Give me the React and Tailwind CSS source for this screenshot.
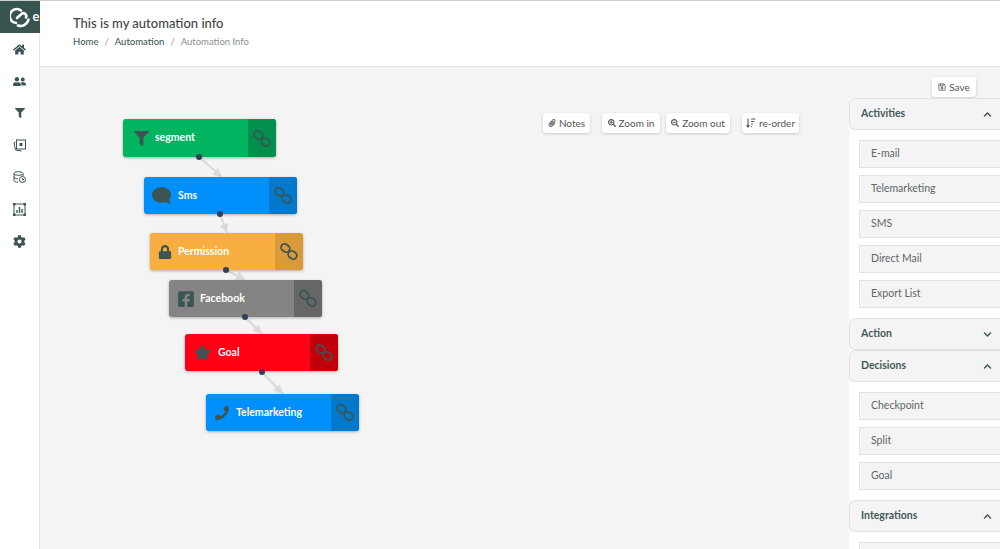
import React from "react";
import { FaHome, FaFilter, FaCog, FaComment, FaLock, FaFacebookSquare, FaStar, FaPhoneAlt, FaPaperclip, FaSearchPlus, FaSearchMinus, FaRegSave, FaChevronUp, FaChevronDown, FaUserFriends } from "react-icons/fa";

const ink = "#3a5553";

function Chain() {
  return (
    <svg width="18" height="17" viewBox="0 0 18 17" fill="none" stroke={ink} strokeWidth="1.7">
      <rect x="0.9" y="1.5" width="9" height="7" rx="3.4" transform="rotate(35 5.4 5)" />
      <rect x="8" y="8.5" width="9" height="7" rx="3.4" transform="rotate(35 12.5 12)" />
    </svg>
  );
}

const nodes = [
  { label: "segment", x: 123, y: 119, w: 153, h: 38, cls: "bg-[#00b460]", dark: "bg-[#008f4c]", Icon: FaFilter, size: 15, iconBox: "w-[32px] pl-[11px]", text: "ml-0" },
  { label: "Sms", x: 144, y: 177, w: 153, h: 37, cls: "bg-[#0090fb]", dark: "bg-[#0079cc]", Icon: FaComment, size: 19, flip: true, iconBox: "w-[34px] pl-[8px]", text: "ml-0" },
  { label: "Permission", x: 150, y: 233, w: 153, h: 37, cls: "bg-[#f8ae40]", dark: "bg-[#da9a39]", Icon: FaLock, size: 14, iconBox: "w-[28px] pl-[8px]", text: "ml-0" },
  { label: "Facebook", x: 169, y: 280, w: 153, h: 37, cls: "bg-[#848484]", dark: "bg-[#666666]", Icon: FaFacebookSquare, size: 18, iconBox: "w-[31px] pl-[8px]", text: "ml-0" },
  { label: "Goal", x: 185, y: 334, w: 153, h: 37, cls: "bg-[#ff0014]", dark: "bg-[#c00009]", Icon: FaStar, size: 17, iconBox: "w-[33px] pl-[9px]", text: "ml-0" },
  { label: "Telemarketing", x: 206, y: 394, w: 153, h: 37, cls: "bg-[#0090fb]", dark: "bg-[#0079cc]", Icon: FaPhoneAlt, size: 14, flipPhone: true, iconBox: "w-[30px] pl-[9px]", text: "ml-0" },
];

const links = [
  [199, 157, 222, 177],
  [220, 214, 227, 233],
  [226, 270, 245, 280],
  [245, 317, 262, 334],
  [262, 372, 283, 394],
];

function Connectors() {
  return (
    <svg className="absolute left-0 top-0" width="960" height="482" viewBox="40 67 960 482">
      {links.map(([a, b, c, d], i) => {
        const ang = Math.atan2(d - b, c - a);
        const p = (r, o) => `${c - r * Math.cos(ang) - o * Math.sin(ang)},${d - r * Math.sin(ang) + o * Math.cos(ang)}`;
        return (
          <g key={i}>
            <line x1={a} y1={b} x2={c} y2={d} stroke="#d9d9d9" strokeWidth="2" />
            <polygon points={`${c},${d} ${p(9, 4.5)} ${p(9, -4.5)}`} fill="#d9d9d9" />
          </g>
        );
      })}
    </svg>
  );
}

function Node({ n }) {
  const { Icon } = n;
  return (
    <div
      className={`absolute flex items-center rounded-[3px] shadow-[0_1px_3px_rgba(0,0,0,0.3)] overflow-hidden ${n.cls}`}
      style={{ left: n.x - 40, top: n.y - 67, width: n.w, height: n.h }}
    >
      <div className={`shrink-0 ${n.iconBox}`}>
        <Icon size={n.size} color={ink} style={n.flip || n.flipPhone ? { transform: "scaleX(-1)" } : undefined} />
      </div>
      <span className="flex-1 text-[10.5px] font-bold text-white">{n.label}</span>
      <div className={`flex h-full w-[28px] items-center justify-center ${n.dark}`}>
        <Chain />
      </div>
    </div>
  );
}

function Dots() {
  return links.map(([a, b], i) => (
    <div key={i} className="absolute h-[6px] w-[6px] rounded-full bg-[#2f4258]" style={{ left: a - 43, top: b - 70 }} />
  ));
}

function ToolBtn({ icon, children, className }) {
  return (
    <button className={`flex h-[20px] items-center justify-center gap-[3px] rounded-[3px] bg-white text-[10px] text-[#555] shadow-[0_1px_3px_rgba(0,0,0,0.18)] ${className}`}>
      {icon}
      {children}
    </button>
  );
}

function SortIcon() {
  return (
    <svg width="10" height="10" viewBox="0 0 10 10" fill="none" stroke="#555" strokeWidth="1.1">
      <path d="M2 0.5v8M0.5 7l1.5 2 1.5-2M5 1h4.5M5 3.5h3.5M5 6h2M5 8.5h1" />
    </svg>
  );
}

function Head({ title, open, className = "" }) {
  return (
    <div className={`flex h-[32px] items-center justify-between rounded-l-[6px] border border-r-0 border-[#e2e2e2] bg-[#f4f4f4] pl-[11px] pr-[8px] ${className}`}>
      <span className="text-[10.5px] font-bold text-[#3f5a57]">{title}</span>
      {open ? <FaChevronUp size={9} color={ink} /> : <FaChevronDown size={9} color={ink} />}
    </div>
  );
}

function Item({ children }) {
  return (
    <div className="flex h-[28px] items-center border border-r-0 border-[#e2e2e2] bg-[#f4f4f4] pl-[11px] text-[10.5px] text-[#5f6668]">
      {children}
    </div>
  );
}

function Items({ list }) {
  return <div className="flex flex-col gap-[7px] bg-white py-[10px] pl-[10px]">{list.map((t) => <Item key={t}>{t}</Item>)}</div>;
}

function Side() {
  const logoMark = (
    <svg width="20" height="24" viewBox="0 0 20 24" fill="none" stroke="#fff" strokeWidth="2.6" strokeLinecap="round">
      <path d="M11 5.5A7 7 0 1 0 6 18" />
      <path d="M7 13l5-4.5a3 3 0 0 1 4 4" />
      <path d="M8 20.5c4 1.5 9-.5 10.5-6" />
    </svg>
  );
  const icons = [
    <FaHome size={13} color={ink} />,
    <FaUserFriends size={13} color={ink} />,
    <FaFilter size={10} color={ink} />,
    <svg width="13" height="13" viewBox="0 0 13 13" fill="none" stroke={ink} strokeWidth="1"><path d="M2.5 3 1 4l1.5 7 6 1" /><rect x="3.5" y="1" width="9" height="9" /><rect x="7" y="4.5" width="2" height="2" fill={ink} /></svg>,
    <svg width="13" height="12" viewBox="0 0 13 12" fill="none" stroke={ink} strokeWidth="1"><ellipse cx="5.5" cy="2.5" rx="4.5" ry="1.8" /><path d="M1 2.5v7c0 1 2 1.8 4 1.8M1 6c0 1 2 1.8 4 1.8M10 3v2" /><circle cx="9.5" cy="8.5" r="3" /><path d="M9.5 7v1.5h1.5" /></svg>,
    <svg width="13" height="13" viewBox="0 0 13 13" fill="none" stroke={ink} strokeWidth="1"><rect x="1" y="1" width="11" height="11" /><path d="M4 10V7M6.5 10V4M9 10V6" strokeWidth="1.4" /><g fill={ink}><rect x="0" y="0" width="2" height="2" /><rect x="11" y="0" width="2" height="2" /><rect x="0" y="11" width="2" height="2" /><rect x="11" y="11" width="2" height="2" /></g></svg>,
    <FaCog size={13} color={ink} />,
  ];
  return (
    <aside className="relative z-10 flex w-[40px] shrink-0 flex-col items-center border-r border-[#e6e6e6] bg-white">
      <div className="flex h-[32px] w-[40px] items-center gap-[3px] overflow-hidden bg-[#37544f] pl-[10px]">
        <div className="shrink-0">{logoMark}</div>
        <span className="text-[13px] font-bold text-white">e</span>
      </div>
      <div className="flex flex-col items-center gap-[16px] pt-[8px]">
        {icons.map((ic, i) => (
          <div key={i} className="flex h-[16px] w-[16px] items-center justify-center">{ic}</div>
        ))}
      </div>
    </aside>
  );
}

export default function App() {
  return (
    <div className="flex h-[549px] w-[1000px] overflow-hidden border-t border-[#cfcfcf] bg-white font-['Lato',sans-serif]">
      <Side />
      <div className="flex min-w-0 flex-1 flex-col">
        <header className="h-[66px] shrink-0 border-b border-[#e2e2e2] bg-white pl-[33px] pt-[14px]">
          <h1 className="text-[13px] leading-[16px] font-medium text-[#444]">This is my automation info</h1>
          <nav className="mt-[4px] flex items-center text-[9.5px] leading-[14px]">
            <span className="font-medium text-[#3f5a57]">Home</span>
            <span className="mx-[6px] text-[#999]">/</span>
            <span className="font-medium text-[#3f5a57]">Automation</span>
            <span className="mx-[6px] text-[#999]">/</span>
            <span className="text-[#8a8f90]">Automation Info</span>
          </nav>
        </header>
        <main className="relative flex min-h-0 flex-1 justify-end bg-[#f4f4f4]">
          <Connectors />
          {nodes.map((n) => <Node key={n.label} n={n} />)}
          <Dots />
          <div className="absolute left-[503px] top-[46px] flex">
            <ToolBtn className="w-[47px]" icon={<FaPaperclip size={8} color="#666" />}>Notes</ToolBtn>
            <ToolBtn className="ml-[12px] w-[58px]" icon={<FaSearchPlus size={8} color="#555" />}>Zoom in</ToolBtn>
            <ToolBtn className="ml-[6px] w-[64px]" icon={<FaSearchMinus size={8} color="#555" />}>Zoom out</ToolBtn>
            <ToolBtn className="ml-[12px] w-[57px]" icon={<SortIcon />}>re-order</ToolBtn>
          </div>
          <div className="flex w-[151px] flex-col">
            <div className="flex h-[31px] shrink-0 items-start justify-end pt-[10px] pr-[24px]">
              <ToolBtn className="w-[44px]" icon={<FaRegSave size={8} color="#555" />}>Save</ToolBtn>
            </div>
            <div className="flex-1 overflow-hidden bg-white">
              <Head title="Activities" open />
              <Items list={["E-mail", "Telemarketing", "SMS", "Direct Mail", "Export List"]} />
              <Head title="Action" />
              <Head title="Decisions" open />
              <Items list={["Checkpoint", "Split", "Goal"]} />
              <Head title="Integrations" open />
              <Items list={["Facebook"]} />
            </div>
          </div>
        </main>
      </div>
    </div>
  );
}
